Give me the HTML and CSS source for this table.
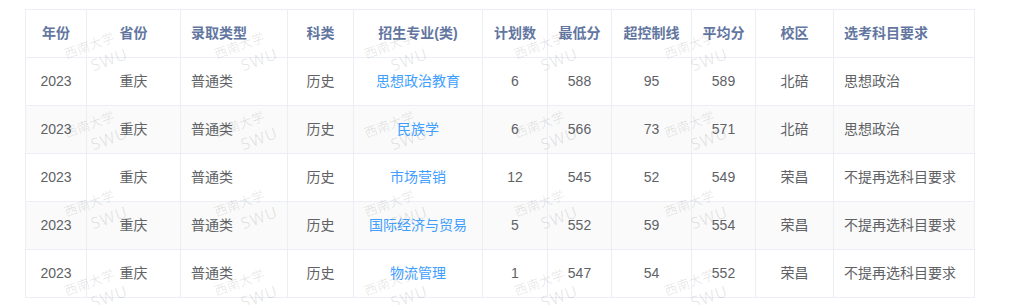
FILE: index.html
```html
<!DOCTYPE html>
<html lang="zh">
<head>
<meta charset="utf-8">
<link rel="stylesheet" href="styles.css">
</head>
<body>
<div class="page">
  <table class="score-table">
    <colgroup>
      <col style="width:61px"><col style="width:94px"><col style="width:107px"><col style="width:66px"><col style="width:129px"><col style="width:65px"><col style="width:64px"><col style="width:80px"><col style="width:64px"><col style="width:78px"><col style="width:141px">
    </colgroup>
    <thead>
      <tr>
        <th>年份</th><th>省份</th><th class="left">录取类型</th><th>科类</th><th>招生专业(类)</th><th>计划数</th><th>最低分</th><th>超控制线</th><th>平均分</th><th>校区</th><th class="left">选考科目要求</th>
      </tr>
    </thead>
    <tbody>
      <tr><td>2023</td><td>重庆</td><td class="left">普通类</td><td>历史</td><td><a class="major">思想政治教育</a></td><td>6</td><td>588</td><td>95</td><td>589</td><td>北碚</td><td class="left">思想政治</td></tr>
      <tr class="striped"><td>2023</td><td>重庆</td><td class="left">普通类</td><td>历史</td><td><a class="major">民族学</a></td><td>6</td><td>566</td><td>73</td><td>571</td><td>北碚</td><td class="left">思想政治</td></tr>
      <tr><td>2023</td><td>重庆</td><td class="left">普通类</td><td>历史</td><td><a class="major">市场营销</a></td><td>12</td><td>545</td><td>52</td><td>549</td><td>荣昌</td><td class="left">不提再选科目要求</td></tr>
      <tr class="striped"><td>2023</td><td>重庆</td><td class="left">普通类</td><td>历史</td><td><a class="major">国际经济与贸易</a></td><td>5</td><td>552</td><td>59</td><td>554</td><td>荣昌</td><td class="left">不提再选科目要求</td></tr>
      <tr><td>2023</td><td>重庆</td><td class="left">普通类</td><td>历史</td><td><a class="major">物流管理</a></td><td>1</td><td>547</td><td>54</td><td>552</td><td>荣昌</td><td class="left">不提再选科目要求</td></tr>
    </tbody>
  </table>
  <div class="watermarks">
    <div class="wm"><span>西南大学</span><span>SWU</span></div><div class="wm"><span>西南大学</span><span>SWU</span></div><div class="wm"><span>西南大学</span><span>SWU</span></div><div class="wm"><span>西南大学</span><span>SWU</span></div><div class="wm"><span>西南大学</span><span>SWU</span></div>
    <div class="wm"><span>西南大学</span><span>SWU</span></div><div class="wm"><span>西南大学</span><span>SWU</span></div><div class="wm"><span>西南大学</span><span>SWU</span></div><div class="wm"><span>西南大学</span><span>SWU</span></div><div class="wm"><span>西南大学</span><span>SWU</span></div>
    <div class="wm"><span>西南大学</span><span>SWU</span></div><div class="wm"><span>西南大学</span><span>SWU</span></div><div class="wm"><span>西南大学</span><span>SWU</span></div><div class="wm"><span>西南大学</span><span>SWU</span></div><div class="wm"><span>西南大学</span><span>SWU</span></div>
    <div class="wm"><span>西南大学</span><span>SWU</span></div><div class="wm"><span>西南大学</span><span>SWU</span></div><div class="wm"><span>西南大学</span><span>SWU</span></div><div class="wm"><span>西南大学</span><span>SWU</span></div><div class="wm"><span>西南大学</span><span>SWU</span></div>
  </div>
</div>
</body>
</html>
```
FILE: styles.css
```css
html, body {
  margin: 0;
  padding: 0;
  background: #ffffff;
}

body {
  font-family: "Liberation Sans", "Noto Sans CJK SC", sans-serif;
  font-size: 14px;
  color: #606266;
  overflow: hidden;
}

.page {
  position: relative;
  padding: 9px 0 0 25px;
  height: 296px;
  overflow: hidden;
}

.score-table {
  border-collapse: collapse;
  table-layout: fixed;
  width: 950px;
  border: 1px solid #ebeef5;
}

.score-table th,
.score-table td {
  border: 1px solid #ebeef5;
  height: 47px;
  padding: 0 10px;
  text-align: center;
  vertical-align: middle;
  white-space: nowrap;
  overflow: hidden;
  line-height: 23px;
}

.score-table th {
  font-weight: bold;
  color: #62769f;
  background: #ffffff;
}

.score-table .left {
  text-align: left;
}

.score-table tr.striped td {
  background: #fafafa;
}

.major {
  color: #409eff;
  text-decoration: none;
}

.watermarks {
  position: absolute;
  left: 25px;
  top: 12px;
  display: grid;
  grid-template-columns: repeat(5, 150px);
  grid-template-rows: repeat(4, 79px);
  pointer-events: none;
}

.wm {
  display: flex;
  flex-direction: column;
  align-items: center;
  justify-content: center;
  transform: rotate(-20deg);
  color: rgba(0, 0, 0, 0.1);
  font-family: "Noto Sans CJK SC", "Liberation Sans", sans-serif;
  line-height: 20px;
}

.wm span:first-child {
  font-size: 13px;
  transform: translateX(-8px);
}

.wm span:last-child {
  font-family: "Open Sans", "Liberation Sans", sans-serif;
  font-size: 16px;
  letter-spacing: 1px;
  transform: translateX(6px);
}
```
